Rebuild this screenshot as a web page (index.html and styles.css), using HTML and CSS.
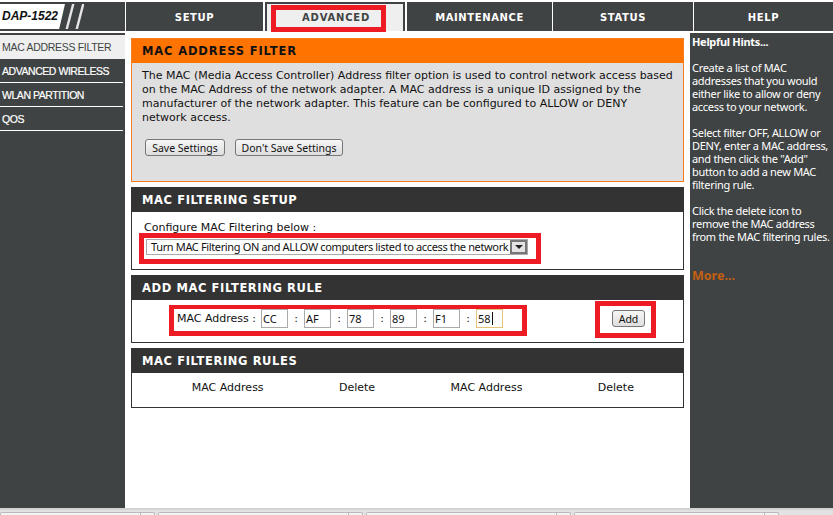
FILE: index.html
```html
<!DOCTYPE html>
<html lang="en">
<head>
<meta charset="utf-8">
<title>DAP-1522</title>
<link rel="stylesheet" href="styles.css">
</head>
<body>
<div class="page">
  <header class="top">
    <div class="logo">
      <span class="logo-plate">DAP-1522</span>
      <svg class="logo-bars" width="84" height="25" viewBox="0 0 84 25"><path d="M72 0H74.5L68 25H65.5ZM82 0H84.5L78 25H75.5Z" fill="#e4e4e4"/></svg>
    </div>
    <nav class="tabs">
      <div class="tab t-setup">SETUP</div>
      <div class="tab t-adv"><span class="adv-mark">ADVANCED</span></div>
      <div class="tab t-maint">MAINTENANCE</div>
      <div class="tab t-status">STATUS</div>
      <div class="tab t-help">HELP</div>
    </nav>
  </header>
  <div class="content">
    <aside class="side">
      <div class="side-item active">MAC ADDRESS FILTER</div>
      <div class="side-item">ADVANCED WIRELESS</div>
      <div class="side-item">WLAN PARTITION</div>
      <div class="side-item">QOS</div>
    </aside>
    <main class="main">
      <section class="box intro">
        <h2 class="box-head orange">MAC ADDRESS FILTER</h2>
        <div class="intro-body">
          <p class="intro-text">The MAC (Media Access Controller) Address filter option is used to control network access based on the MAC Address of the network adapter. A MAC address is a unique ID assigned by the manufacturer of the network adapter. This feature can be configured to ALLOW or DENY network access.</p>
          <div class="btn-row">
            <button class="btn save">Save Settings</button>
            <button class="btn nosave">Don't Save Settings</button>
          </div>
        </div>
      </section>
      <section class="box setup">
        <h2 class="box-head">MAC FILTERING SETUP</h2>
        <div class="setup-body">
          <div class="setup-label">Configure MAC Filtering below :</div>
          <div class="red select-mark">
            <div class="select">
              <span class="select-text">Turn MAC Filtering ON and ALLOW computers listed to access the network</span>
              <span class="select-arrow"><svg width="8" height="4" viewBox="0 0 8 4"><path d="M0 0H8L4 4Z" fill="#222"/></svg></span>
            </div>
          </div>
        </div>
      </section>
      <section class="box add">
        <h2 class="box-head">ADD MAC FILTERING RULE</h2>
        <div class="add-body">
          <div class="red mac-mark">
            <span class="mac-label">MAC Address :</span>
            <span class="field">CC</span><span class="colon">:</span>
            <span class="field">AF</span><span class="colon">:</span>
            <span class="field">78</span><span class="colon">:</span>
            <span class="field">89</span><span class="colon">:</span>
            <span class="field">F1</span><span class="colon">:</span>
            <span class="field focus">58<span class="caret"></span></span>
          </div>
          <div class="red add-mark"><button class="btn add-btn">Add</button></div>
        </div>
      </section>
      <section class="box rules">
        <h2 class="box-head">MAC FILTERING RULES</h2>
        <div class="rules-body">
          <span>MAC Address</span><span>Delete</span><span>MAC Address</span><span>Delete</span>
        </div>
      </section>
    </main>
    <aside class="hints">
      <h3 class="hints-title">Helpful Hints...</h3>
      <p>Create a list of MAC addresses that you would either like to allow or deny access to your network.</p>
      <p>Select filter OFF, ALLOW or DENY, enter a MAC address, and then click the "Add" button to add a new MAC filtering rule.</p>
      <p>Click the delete icon to remove the MAC address from the MAC filtering rules.</p>
      <p class="more">More...</p>
    </aside>
  </div>
  <footer class="taskbar">
    <div class="task first"><span class="task-end"></span></div>
    <div class="task"><span class="task-end"></span></div>
    <div class="task"><span class="task-end"></span></div>
    <div class="task"><span class="task-end"></span></div>
  </footer>
</div>
</body>
</html>
```
FILE: styles.css
```css
* { box-sizing: border-box; }
html, body { margin: 0; padding: 0; height: 100%; background: #fff; overflow: hidden; }
body { font-family: "DejaVu Sans", Verdana, sans-serif; color: #111; }
.page { width: 833px; height: 515px; display: flex; flex-direction: column; padding-top: 2px; }

.top { display: flex; height: 29px; gap: 1px; flex: none; }
.logo { width: 125px; background: #404343; position: relative; padding-top: 2px; }
.logo-plate { display: block; background: #fff; width: 65px; height: 25px; clip-path: polygon(0 0, 100% 0, 91% 100%, 0 100%); font: italic bold 12px/25px "Liberation Sans", sans-serif; color: #111; padding-left: 2px; }
.logo-bars { position: absolute; left: 0; top: 2px; }
.tabs { flex: 1; display: flex; }
.tab { background: #404343; color: #fff; font: bold 10px/31px "DejaVu Sans", sans-serif; letter-spacing: 0.6px; text-align: center; }
.t-setup { width: 137px; margin-right: 2px; }
.t-adv { width: 140px; margin-right: 2px; background: #efefef; border: solid #404343; border-width: 2px 2px 0; text-align: left; }
.adv-mark { display: block; margin: 1px 0 0 4px; width: 115px; height: 27px; border: 5px solid #ed1c24; color: #404343; line-height: 15px; padding-left: 26px; letter-spacing: 0.8px; }
.t-maint { width: 145px; margin-right: 1px; }
.t-status { width: 140px; margin-right: 1px; }
.t-help { flex: 1; }

.content { flex: 1; display: flex; padding-top: 2px; min-height: 0; }
.side { width: 125px; background: #404343; color: #fff; flex: none; padding-top: 2px; }
.side-item { height: 24px; width: 123px; font: 10.5px/24px "Liberation Sans", Tahoma, sans-serif; letter-spacing: -0.45px; padding-left: 2px; border-bottom: 1px solid #fff; -webkit-text-stroke: 0.2px #fff; }
.side-item.active { background: #efefef; color: #404343; width: 125px; border-bottom: 0; -webkit-text-stroke: 0; letter-spacing: -0.3px; }

.main { flex: 1; padding: 5px 6px 0 6px; display: flex; flex-direction: column; }
.box { border: 1px solid #333; flex: none; }
.box-head { margin: 0; height: 24px; background: #333; color: #fff; font: bold 11.5px/25px "DejaVu Sans", sans-serif; letter-spacing: 0.6px; padding-left: 10px; }
.box-head.orange { background: #ff7300; color: #111; letter-spacing: 0.85px; }

.intro { height: 144px; border-color: #f57c1f; background: #dfdfdf; }
.intro-body { padding: 6px 10px; }
.intro-text { margin: 0; font-size: 11px; line-height: 14px; color: #111; }
.btn-row { margin-top: 14px; display: flex; gap: 10px; padding-left: 3px; }
.btn { font: 10.5px "Noto Sans", sans-serif; height: 17px; padding: 0; border: 1px solid #777; border-radius: 3px; background: linear-gradient(#f6f6f6, #dedede); color: #111; line-height: 14px; }
.save { width: 80px; }
.nosave { width: 108px; }

.setup { margin-top: 5px; height: 83px; }
.setup-body { padding: 9px 0 0 7px; }
.setup-label { font-size: 11px; line-height: 14px; margin-bottom: -2px; padding-left: 5px; }
.red { border: 5px solid #ed1c24; background: #fff; }
.select-mark { width: 402px; height: 31px; }
.select { width: 382px; height: 16px; margin: 1px 0 0 2px; border: 1px solid #aaa; display: flex; align-items: center; justify-content: space-between; padding-left: 4px; }
.select-text { font: 11px/14px "Noto Sans", sans-serif; letter-spacing: -0.36px; white-space: nowrap; }
.select-arrow { width: 17px; height: 14px; background: #e4e4e4; border: 2px solid #777; display: flex; align-items: center; justify-content: center; flex: none; }

.add { margin-top: 5px; height: 68px; }
.add-body { display: flex; align-items: flex-start; }
.mac-mark { margin: 5px 0 0 37px; width: 358px; height: 31px; display: flex; align-items: flex-start; border-width: 4px 5px 5px; padding-left: 3px; font-size: 11px; }
.mac-label { width: 84px; line-height: 19px; }
.field { width: 27px; height: 19px; border: 1px solid #aaa; font: 11px/17px "Noto Sans", sans-serif; padding-left: 1px; display: flex; align-items: center; }
.field.focus { border-color: #e5c27a; }
.caret { width: 1px; height: 13px; background: #111; margin-left: 1px; }
.colon { width: 16px; text-align: center; line-height: 19px; }
.add-mark { margin: 1px 0 0 68px; width: 61px; height: 37px; display: flex; align-items: flex-start; justify-content: flex-end; padding: 4px 6px 0 0; }
.add-btn { width: 33px; }

.rules { margin-top: 5px; height: 60px; }
.rules-body { display: grid; grid-template-columns: repeat(4, 129.4px); justify-items: center; padding: 7px 0 0 31px; font-size: 11px; line-height: 15px; }

.hints { width: 143px; flex: none; background: #404343; color: #fff; font: 11px/13px "Noto Sans", sans-serif; letter-spacing: -0.3px; padding: 2px 0 2px 2px; }
.hints p { margin: 0 0 13px; }
.hints-title { margin: 0 0 13px; font: bold 11px/13px "Noto Sans", sans-serif; }
.more { color: #c55f10; font-weight: bold; font-size: 12.5px; letter-spacing: 0; margin-top: 26px !important; }

.taskbar { height: 7px; flex: none; background: #e2e2e2; border-top: 2px solid #d2d2d2; display: flex; gap: 3px; padding-top: 2px; }
.task { width: 205px; height: 3px; background: #f3f3f3; border: 1px solid #bbb; border-bottom: 0; border-radius: 2px 2px 0 0; position: relative; }
.task.first { width: 155px; }
.task-end { position: absolute; right: 13px; top: 0; width: 1px; height: 2px; background: #bbb; }
```
